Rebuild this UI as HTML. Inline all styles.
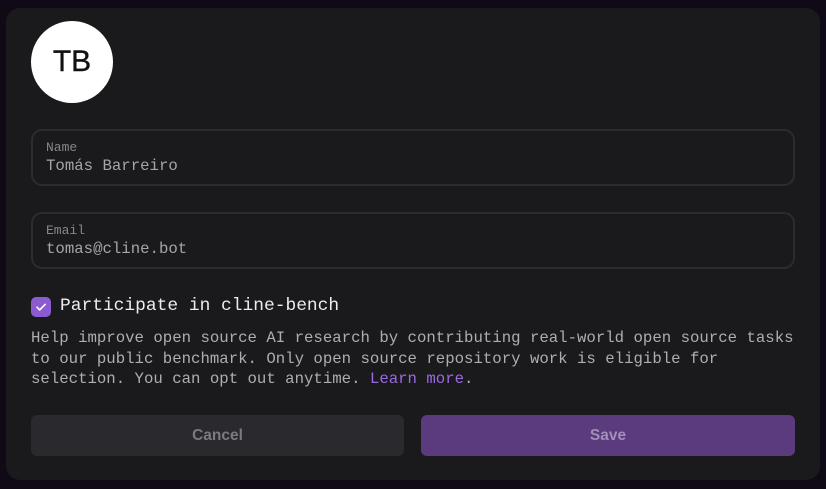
<!DOCTYPE html>
<html><head><style>
*{margin:0;padding:0;box-sizing:border-box}
body{width:826px;height:489px;background:#0f0a16;overflow:hidden;font-family:"Liberation Mono",monospace}
.card{position:absolute;left:6px;top:8px;width:814px;height:472px;background:#1a191c;border-radius:14px}
.av{position:absolute;left:31px;top:21px;width:82px;height:82px;border-radius:50%;background:#fff;color:#111;font-family:"Liberation Sans",sans-serif;font-size:30px;display:flex;align-items:center;justify-content:center;-webkit-text-stroke:0.4px #111}
.f{position:absolute;left:31px;width:764px;height:57px;border:2px solid #2c2b2f;border-radius:11px}
.f .l{position:absolute;left:13px;top:9px;font-size:13px;color:#87868b}
.f .v{position:absolute;left:13px;top:26px;font-size:15.7px;color:#a5a4a9}
.cb{position:absolute;left:31px;top:297px;width:20px;height:20px;border-radius:5px;background:#8b5cd0}
.h{position:absolute;left:60px;top:296px;font-size:17.9px;color:#ececef}
.p{position:absolute;left:31px;top:328px;font-size:15.7px;line-height:20.7px;color:#aeadb2;width:795px;white-space:nowrap}
.p a{color:#9a6ae0;text-decoration:none}
.b{position:absolute;top:415px;height:41px;border-radius:6px;font-family:"Liberation Sans",sans-serif;font-size:15.5px;font-weight:bold;display:flex;align-items:center;justify-content:center}
</style></head><body>
<div class="card"></div>
<div class="av">TB</div>
<div class="f" style="top:129px"><div class="l">Name</div><div class="v">Tomás Barreiro</div></div>
<div class="f" style="top:212px"><div class="l">Email</div><div class="v">tomas@cline.bot</div></div>
<div class="cb"><svg width="20" height="20" viewBox="0 0 20 20"><path d="M6 10.2l2.7 2.7L14.2 7.3" fill="none" stroke="#fff" stroke-width="1.6" stroke-linecap="round" stroke-linejoin="round"/></svg></div>
<div class="h">Participate in cline-bench</div>
<div class="p">Help improve open source AI research by contributing real-world open source tasks<br>to our public benchmark. Only open source repository work is eligible for<br>selection. You can opt out anytime. <a>Learn more</a>.</div>
<div class="b" style="left:31px;width:373px;background:#2a292d;color:#7b7a7f">Cancel</div>
<div class="b" style="left:421px;width:374px;background:#5b3a7e;color:#a08fb8">Save</div>
</body></html>
